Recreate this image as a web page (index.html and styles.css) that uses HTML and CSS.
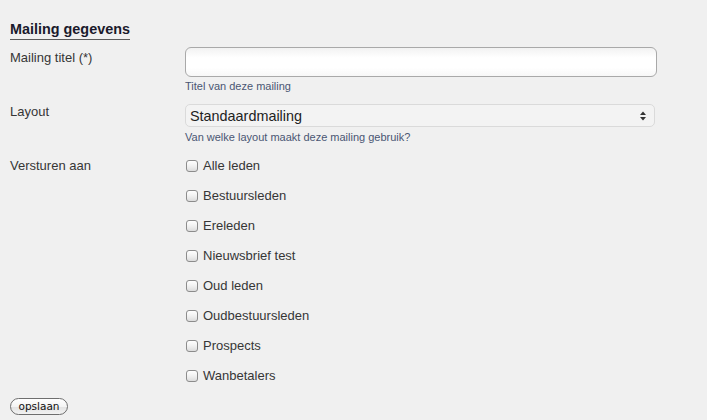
FILE: index.html
```html
<!DOCTYPE html>
<html lang="nl">
<head>
<meta charset="utf-8">
<title>Mailing gegevens</title>
<link rel="stylesheet" href="styles.css">
</head>
<body>
<h2 class="section-title">Mailing gegevens</h2>
<form class="form">
  <div class="row row-title">
    <label class="label label-title" for="titel">Mailing titel (*)</label>
    <div class="field">
      <input class="text-input" id="titel" type="text">
      <div class="help help-title">Titel van deze mailing</div>
    </div>
  </div>
  <div class="row row-layout">
    <label class="label" for="layout">Layout</label>
    <div class="field">
      <div class="select-wrap">
        <select class="select" id="layout">
          <option>Standaardmailing</option>
        </select>
        <svg class="select-arrows" width="8" height="12" viewBox="0 0 8 12">
          <path d="M1 5 L4 1.5 L7 5 Z" fill="#333"/>
          <path d="M1 7 L4 10.5 L7 7 Z" fill="#333"/>
        </svg>
      </div>
      <div class="help help-layout">Van welke layout maakt deze mailing gebruik?</div>
    </div>
  </div>
  <div class="row row-send">
    <div class="label label-send">Versturen aan</div>
    <div class="field options">
      <label class="option"><input class="check" type="checkbox"><span>Alle leden</span></label>
      <label class="option"><input class="check" type="checkbox"><span>Bestuursleden</span></label>
      <label class="option"><input class="check" type="checkbox"><span>Ereleden</span></label>
      <label class="option"><input class="check" type="checkbox"><span>Nieuwsbrief test</span></label>
      <label class="option"><input class="check" type="checkbox"><span>Oud leden</span></label>
      <label class="option"><input class="check" type="checkbox"><span>Oudbestuursleden</span></label>
      <label class="option"><input class="check" type="checkbox"><span>Prospects</span></label>
      <label class="option"><input class="check" type="checkbox"><span>Wanbetalers</span></label>
    </div>
  </div>
  <button class="save" type="button">opslaan</button>
</form>
</body>
</html>
```

FILE: styles.css
```css
html, body {
  margin: 0;
  padding: 0;
}
body {
  background: #f0f0f0;
  padding: 0 10px;
  font-family: "Liberation Sans", Arial, Helvetica, sans-serif;
  color: #363636;
  width: 687px;
  height: 420px;
  overflow: hidden;
}
.section-title {
  display: inline-block;
  margin: 21px 0 0 0;
  font-size: 14.4px;
  line-height: 17px;
  font-weight: bold;
  color: #1a1a2c;
  padding-bottom: 1px;
  border-bottom: 1px solid #5a5a5a;
}
.form {
  margin: 7px 0 0 0;
}
.row {
  display: grid;
  grid-template-columns: 175px 472px;
}
.row-layout {
  margin-top: 11px;
}
.row-send {
  margin-top: 13px;
}
.label {
  font-size: 13px;
  line-height: 16px;
  color: #363636;
}
.label-title {
  padding-top: 3px;
}
.label-send {
  line-height: 18px;
}
.field {
  display: flex;
  flex-direction: column;
}
.text-input {
  box-sizing: border-box;
  width: 472px;
  height: 30px;
  margin: 0;
  border: 1px solid #a9a9a9;
  border-radius: 6px;
  background: linear-gradient(to bottom, #f2f2f2 0%, #ffffff 35%, #ffffff 70%, #f7f7f7 100%);
  font-family: inherit;
  font-size: 13px;
  padding: 0 6px;
}
.help {
  font-size: 11px;
  line-height: 14px;
  color: #4a5673;
}
.help-title {
  margin-top: 2px;
}
.help-layout {
  margin-top: 3px;
}
.select-wrap {
  position: relative;
  width: 470px;
  height: 23px;
}
.select {
  -webkit-appearance: none;
  appearance: none;
  box-sizing: border-box;
  width: 470px;
  height: 23px;
  margin: 0;
  border: 1px solid #dadada;
  border-radius: 5px;
  background: #f3f3f3;
  font-family: "Liberation Sans", Arial, sans-serif;
  font-size: 14.4px;
  color: #222;
  padding: 0 0 0 4px;
}
.select-arrows {
  position: absolute;
  right: 8px;
  top: 6px;
}
.options {
  gap: 12px;
}
.option {
  display: flex;
  align-items: center;
  height: 18px;
  font-size: 13px;
  line-height: 18px;
  color: #363636;
}
.check {
  -webkit-appearance: none;
  appearance: none;
  box-sizing: border-box;
  width: 12px;
  height: 12px;
  margin: 0 5px 0 1px;
  border: 1px solid #8c8c8c;
  border-radius: 3px;
  background: linear-gradient(to bottom, #ffffff 0%, #f1f1f1 50%, #dcdcdc 100%);
}
.save {
  display: block;
  box-sizing: border-box;
  margin-top: 13px;
  width: 58px;
  height: 17px;
  padding: 0;
  border: 1px solid #6e6e6e;
  border-radius: 9px;
  background: linear-gradient(to bottom, #ffffff 0%, #f4f4f4 50%, #e2e2e2 51%, #f2f2f2 100%);
  font-family: "DejaVu Sans", "Lucida Grande", sans-serif;
  font-size: 10.5px;
  line-height: 15px;
  color: #111;
}
```
